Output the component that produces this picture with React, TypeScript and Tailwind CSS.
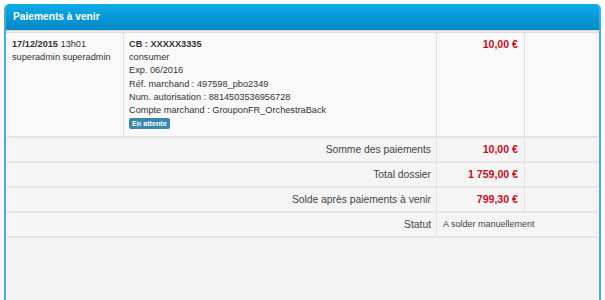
import React from 'react';

const font = { fontFamily: '"Liberation Sans", Arial, sans-serif' };

type SummaryRow = { label: string; value: string; plain?: boolean };

const summary: SummaryRow[] = [
  { label: 'Somme des paiements', value: '10,00 €' },
  { label: 'Total dossier', value: '1 759,00 €' },
  { label: 'Solde après paiements à venir', value: '799,30 €' },
  { label: 'Statut', value: 'A solder manuellement', plain: true },
];

const App = () => {
  return (
    <div className="w-[605px] h-[300px] bg-white overflow-hidden pt-[4px] px-[4px]" style={font}>
      <div className="h-full flex flex-col border-x-2 border-[#43ace3] rounded-t-[5px] overflow-hidden bg-[#f4f4f4]">
        {/* Header */}
        <div className="h-[26px] shrink-0 flex items-center px-[7px] bg-gradient-to-b from-[#0cabe8] to-[#0587c6] text-white text-[10.2px] font-bold">
          Paiements à venir
        </div>
        <div className="h-[3px] shrink-0 border-t border-[#d2d2d2] bg-[#eeeeee] border-b border-b-[#dddddd]" />

        {/* Table */}
        <div className="px-[1px] text-[9.2px] text-[#333]">
          <div className="grid grid-cols-[117px_313px_88px_1fr] bg-[#f9f9f9] border-b-2 border-[#e4e4e4]">
            <div className="px-[5px] pt-[5px] leading-[13.2px] border-r border-[#e2e2e2]">
              <div><span className="font-bold">17/12/2015</span> 13h01</div>
              <div>superadmin superadmin</div>
            </div>
            <div className="px-[5px] pt-[5px] pb-[7px] leading-[13.2px] border-r border-[#e2e2e2]">
              <div className="font-bold">CB : XXXXX3335</div>
              <div>consumer</div>
              <div>Exp. 06/2016</div>
              <div>Réf. marchand : 497598_pbo2349</div>
              <div>Num. autorisation : 8814503536956728</div>
              <div>Compte marchand : GrouponFR_OrchestraBack</div>
              <div className="leading-[11px] mt-[1px]">
                <span className="inline-block bg-[#3a87ad] text-white text-[7.2px] font-bold leading-[11px] px-[3px] rounded-[2px]">
                  En attente
                </span>
              </div>
            </div>
            <div className="px-[6px] pt-[5px] text-right font-bold text-[10.6px] text-[#cc0c1c] leading-[13.2px] border-r border-[#e2e2e2]">
              10,00 €
            </div>
            <div />
          </div>

          {summary.map((r) => (
            <div
              key={r.label}
              className="grid grid-cols-[430px_88px_1fr] h-[25px] items-stretch border-b-2 border-[#e6e6e6] bg-[#f5f5f5]"
            >
              <div className="flex items-center justify-end pr-[5px] text-[10.3px] text-[#444] border-r border-[#e2e2e2]">
                {r.label}
              </div>
              {r.plain ? (
                <div className="col-span-2 flex items-center px-[6px] text-[9px] text-[#444]">{r.value}</div>
              ) : (
                <>
                  <div className="flex items-center justify-end px-[6px] font-bold text-[10.6px] text-[#cc0c1c] border-r border-[#e2e2e2]">
                    {r.value}
                  </div>
                  <div />
                </>
              )}
            </div>
          ))}
        </div>
      </div>
    </div>
  );
};

export default App;
